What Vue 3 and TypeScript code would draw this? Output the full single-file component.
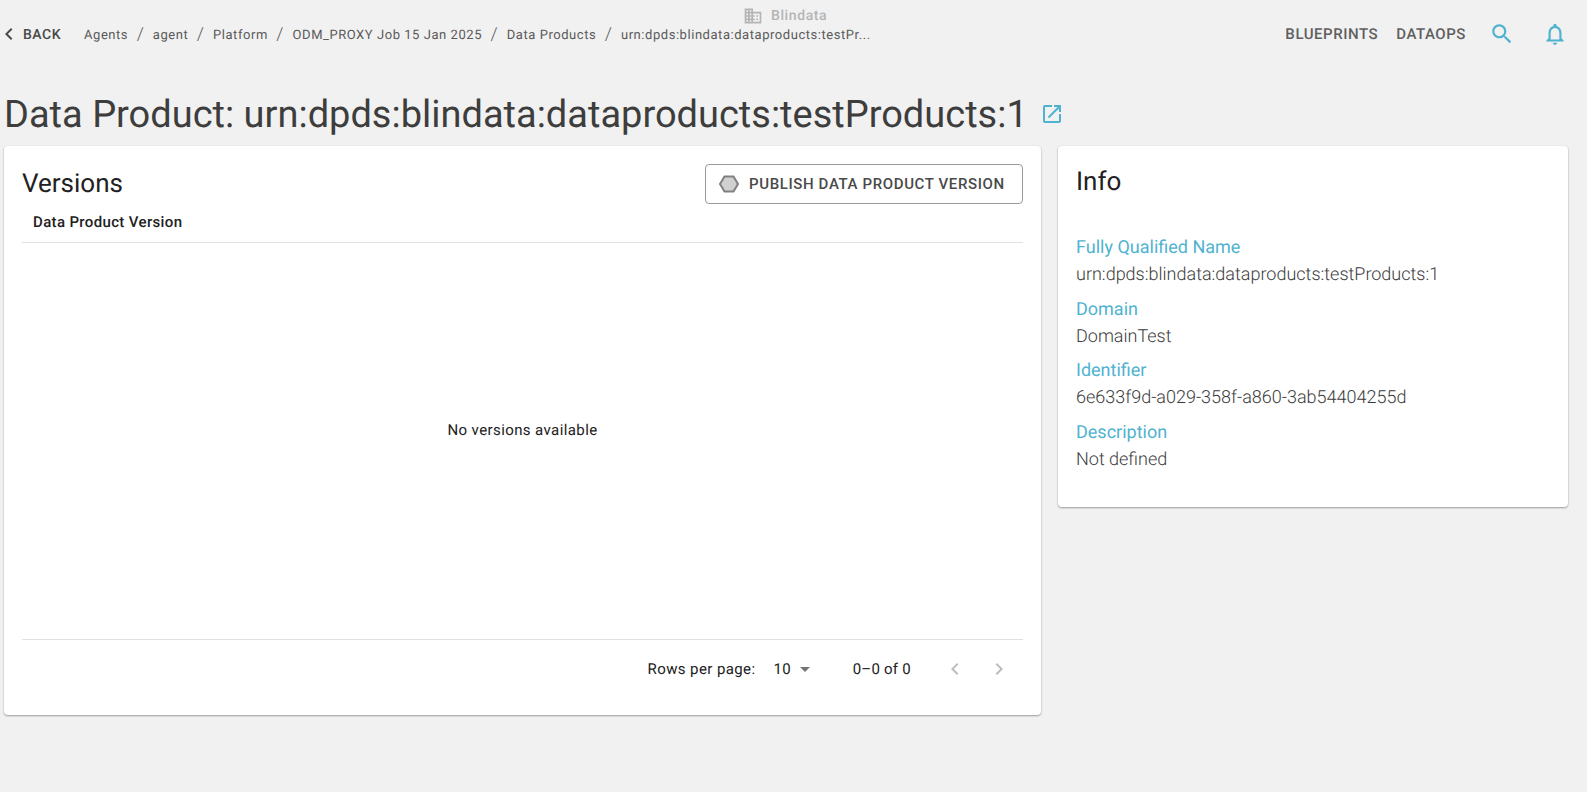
<script setup lang="ts">
const crumbs: string[] = ['Agents', 'agent', 'Platform', 'ODM_PROXY Job 15 Jan 2025', 'Data Products', 'urn:dpds:blindata:dataproducts:testPr...']
const info: { label: string; value: string }[] = [
  { label: 'Fully Qualified Name', value: 'urn:dpds:blindata:dataproducts:testProducts:1' },
  { label: 'Domain', value: 'DomainTest' },
  { label: 'Identifier', value: '6e633f9d-a029-358f-a860-3ab54404255d' },
  { label: 'Description', value: 'Not defined' }
]
</script>

<template>
  <div class="page">
    <header class="topbar">
      <div class="brand">
        <svg class="brand-icon" viewBox="0 0 24 24"><path d="M12 7V3H2v18h20V7H12zM6 19H4v-2h2v2zm0-4H4v-2h2v2zm0-4H4V9h2v2zm0-4H4V5h2v2zm4 12H8v-2h2v2zm0-4H8v-2h2v2zm0-4H8V9h2v2zm0-4H8V5h2v2zm10 12h-8v-2h2v-2h-2v-2h2v-2h-2V9h8v10zm-2-8h-2v2h2v-2zm0 4h-2v2h2v-2z" /></svg>
        <span>Blindata</span>
      </div>
      <div class="back">
        <svg class="back-icon" viewBox="0 0 24 24"><path d="M15.41 7.41 14 6l-6 6 6 6 1.41-1.41L10.83 12z" /></svg>
        <span>BACK</span>
      </div>
      <nav class="crumbs">
        <template v-for="(c, i) in crumbs" :key="c">
          <span v-if="i > 0" class="sep">/</span>
          <span class="crumb">{{ c }}</span>
        </template>
      </nav>
      <div class="spacer"></div>
      <span class="navlink first">BLUEPRINTS</span>
      <span class="navlink last">DATAOPS</span>
      <svg class="search" viewBox="0 0 24 24"><path d="M15.5 14h-.79l-.28-.27C15.41 12.59 16 11.11 16 9.5 16 5.91 13.09 3 9.5 3S3 5.91 3 9.5 5.91 16 9.5 16c1.61 0 3.09-.59 4.23-1.57l.27.28v.79l5 4.99L20.49 19l-4.99-5zm-6 0C7.01 14 5 11.99 5 9.5S7.01 5 9.5 5 14 7.01 14 9.5 11.99 14 9.5 14z" /></svg>
      <svg class="bell" viewBox="0 0 24 24"><path d="M12 22c1.100 0 2-.9 2-2h-4c0 1.100.9 2 2 2zm6-6v-5c0-3.070-1.630-5.640-4.500-6.320V4c0-.83-.67-1.500-1.500-1.500s-1.500.67-1.500 1.500v.68C7.640 5.360 6 7.920 6 11v5l-2 2v1h16v-1l-2-2zm-2 1H8v-6c0-2.480 1.510-4.500 4-4.500s4 2.020 4 4.500v6z" /></svg>
    </header>

    <div class="title-row">
      <h1 class="title">Data Product: urn:dpds:blindata:dataproducts:testProducts:1</h1>
      <svg class="open" viewBox="0 0 24 24"><path d="M19 19H5V5h7V3H5c-1.110 0-2 .9-2 2v14c0 1.100.89 2 2 2h14c1.100 0 2-.9 2-2v-7h-2v7zM14 3v2h3.590l-9.830 9.830 1.410 1.410L19 6.410V10h2V3h-7z" /></svg>
    </div>

    <main class="columns">
      <section class="card versions">
        <div class="versions-head">
          <h2 class="card-title">Versions</h2>
          <button class="publish">
            <svg class="hex" viewBox="0 0 24 24"><path d="M7.500 4.500h9L21 12l-4.500 7.500h-9L3 12z" /></svg>
            <span>PUBLISH DATA PRODUCT VERSION</span>
          </button>
        </div>
        <div class="table-head">Data Product Version</div>
        <div class="empty">No versions available</div>
        <div class="pager">
          <span>Rows per page:</span>
          <span class="size">10</span>
          <svg class="caret" viewBox="0 0 24 24"><path d="M7 10l5 5 5-5z" /></svg>
          <span class="range">0–0 of 0</span>
          <svg class="pg prev" viewBox="0 0 24 24"><path d="M15.410 7.410 14 6l-6 6 6 6 1.410-1.410L10.830 12z" /></svg>
          <svg class="pg next" viewBox="0 0 24 24"><path d="M10 6 8.590 7.410 13.170 12l-4.580 4.590L10 18l6-6z" /></svg>
        </div>
      </section>

      <aside class="card info">
        <h2 class="card-title info-title">Info</h2>
        <div class="fields">
          <div v-for="f in info" :key="f.label" class="field">
            <div class="label">{{ f.label }}</div>
            <div class="value">{{ f.value }}</div>
          </div>
        </div>
      </aside>
    </main>
  </div>
</template>

<style>
html, body { margin: 0; background: #f1f1f1; }
</style>

<style scoped>
.page {
  height: 792px;
  box-sizing: border-box;
  background: #f1f1f1;
  font-family: Roboto, "Liberation Sans", sans-serif;
  color: #3b3b3b;
  overflow: hidden;
  text-rendering: geometricPrecision;
}
.topbar {
  position: relative;
  height: 68px;
  display: flex;
  align-items: center;
  padding: 0 19px 0 0;
  box-sizing: border-box;
}
.brand {
  position: absolute;
  left: 743px;
  top: 6px;
  display: flex;
  align-items: center;
  gap: 8px;
  font-size: 14px;
  font-weight: 500;
  letter-spacing: 0.6px;
  color: #b5b5b5;
}
.brand-icon { width: 20px; height: 20px; fill: #b5b5b5; }
.back {
  display: flex;
  align-items: center;
  font-size: 14px;
  font-weight: 500;
  letter-spacing: 0.5px;
  color: #4a4a4a;
  width: 84px;
}
.back span { padding-top: 2px; }
.back-icon { width: 24px; height: 24px; fill: #4a4a4a; margin: 0 2px 0 -3px; flex: none; }
.crumbs {
  display: flex;
  align-items: center;
  padding-top: 2px;
  font-size: 13px;
  letter-spacing: 0.55px;
  color: #5a5a5a;
}
.sep { margin: 0 8.5px; font-size: 18px; font-weight: 300; line-height: 20px; color: #5a5a5a; }
.spacer { flex: 1; }
.navlink {
  font-size: 15px;
  font-weight: 500;
  letter-spacing: 0.55px;
  color: #5f5f5f;
  margin-right: 18px;
}
.navlink.last { margin-right: 23px; }
.search { width: 26px; height: 26px; fill: #4fb3d0; margin-right: 27px; }
.bell { width: 26px; height: 26px; fill: #4fb3d0; }
.title-row {
  display: flex;
  align-items: center;
  height: 78px;
  padding: 16px 0 0 4px;
  box-sizing: border-box;
}
.title {
  margin: 0;
  font-size: 38px;
  font-weight: 400;
  color: #3d3d3d;
  line-height: 44px;
  white-space: nowrap;
}
.open { width: 24px; height: 24px; fill: #4fb3d0; margin: -2px 0 0 12px; }
.columns {
  display: flex;
  align-items: flex-start;
  gap: 17px;
  padding: 0 19px 0 4px;
}
.card {
  background: #fff;
  border-radius: 4px;
  box-shadow: 0 1px 2px rgba(0, 0, 0, 0.35), 0 0 2px rgba(0, 0, 0, 0.06);
  box-sizing: border-box;
}
.versions {
  width: 1037px;
  height: 569px;
  padding: 18px 18px 0;
  display: flex;
  flex-direction: column;
}
.versions-head {
  display: flex;
  align-items: center;
  justify-content: space-between;
  height: 40px;
}
.card-title {
  margin: 0;
  font-size: 26px;
  font-weight: 400;
  color: #212121;
}
.publish {
  width: 318px;
  height: 40px;
  border: 1px solid #9a9a9a;
  border-radius: 4px;
  background: #fff;
  display: flex;
  align-items: center;
  padding: 0 11px;
  gap: 8px;
  font-family: inherit;
  font-size: 15px;
  font-weight: 500;
  letter-spacing: 0.62px;
  color: #4a4a4a;
  box-sizing: border-box;
}
.hex { width: 24px; height: 24px; fill: #d0d0d0; stroke: #808080; stroke-width: 2; flex: none; }
.table-head {
  height: 39px;
  box-sizing: border-box;
  padding: 6px 11px 0;
  line-height: 24px;
  font-size: 15px;
  font-weight: 500;
  letter-spacing: 0.35px;
  color: #212121;
  border-bottom: 1px solid #e0e0e0;
}
.empty {
  flex: 1;
  display: flex;
  align-items: center;
  justify-content: center;
  padding-bottom: 22px;
  font-size: 15px;
  letter-spacing: 0.4px;
  color: #212121;
  border-bottom: 1px solid #e0e0e0;
}
.pager {
  height: 75px;
  padding-bottom: 17px;
  box-sizing: border-box;
  display: flex;
  align-items: center;
  justify-content: flex-end;
  font-size: 15px;
  letter-spacing: 0.4px;
  color: #212121;
}
.size { margin-left: 18px; }
.caret { width: 24px; height: 24px; fill: #757575; flex: none; margin-left: 1.5px; }
.range { margin: 0 32px 0 36px; letter-spacing: 0.25px; }
.pg { width: 24px; height: 24px; fill: #bdbdbd; flex: none; }
.next { margin-left: 20px; margin-right: 12px; }
.info {
  width: 510px;
  height: 361px;
  padding: 18px;
}
.info-title { line-height: 37px; }
.fields { margin-top: 33px; }
.field { margin-bottom: 7.7px; }
.label {
  font-size: 18px;
  line-height: 27px;
  color: #4fb3d0;
}
.value {
  font-size: 18px;
  font-weight: 300;
  line-height: 27px;
  color: #3b3b3b;
}
</style>
